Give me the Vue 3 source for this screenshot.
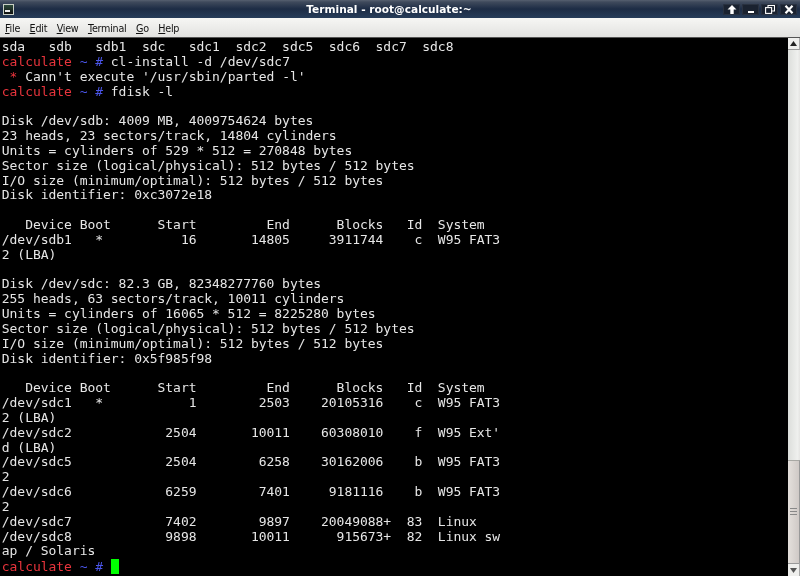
<script setup>
const L = (t) => [{ t }]
const P = (t = '') => [
  { t: 'calculate', c: 'red' },
  { t: ' ~ # ', c: 'blue' },
  { t }
]
const lines = [
  L('sda   sdb   sdb1  sdc   sdc1  sdc2  sdc5  sdc6  sdc7  sdc8'),
  P('cl-install -d /dev/sdc7'),
  [{ t: ' * ', c: 'red' }, { t: "Cann't execute '/usr/sbin/parted -l'" }],
  P('fdisk -l'),
  L(''),
  L('Disk /dev/sdb: 4009 MB, 4009754624 bytes'),
  L('23 heads, 23 sectors/track, 14804 cylinders'),
  L('Units = cylinders of 529 * 512 = 270848 bytes'),
  L('Sector size (logical/physical): 512 bytes / 512 bytes'),
  L('I/O size (minimum/optimal): 512 bytes / 512 bytes'),
  L('Disk identifier: 0xc3072e18'),
  L(''),
  L('   Device Boot      Start         End      Blocks   Id  System'),
  L('/dev/sdb1   *          16       14805     3911744    c  W95 FAT3'),
  L('2 (LBA)'),
  L(''),
  L('Disk /dev/sdc: 82.3 GB, 82348277760 bytes'),
  L('255 heads, 63 sectors/track, 10011 cylinders'),
  L('Units = cylinders of 16065 * 512 = 8225280 bytes'),
  L('Sector size (logical/physical): 512 bytes / 512 bytes'),
  L('I/O size (minimum/optimal): 512 bytes / 512 bytes'),
  L('Disk identifier: 0x5f985f98'),
  L(''),
  L('   Device Boot      Start         End      Blocks   Id  System'),
  L('/dev/sdc1   *           1        2503    20105316    c  W95 FAT3'),
  L('2 (LBA)'),
  L('/dev/sdc2            2504       10011    60308010    f  W95 Ext\''),
  L('d (LBA)'),
  L('/dev/sdc5            2504        6258    30162006    b  W95 FAT3'),
  L('2'),
  L('/dev/sdc6            6259        7401     9181116    b  W95 FAT3'),
  L('2'),
  L('/dev/sdc7            7402        9897    20049088+  83  Linux'),
  L('/dev/sdc8            9898       10011      915673+  82  Linux sw'),
  L('ap / Solaris'),
]
const menus = [
  ['F', 'ile'], ['E', 'dit'], ['V', 'iew'], ['T', 'erminal'], ['G', 'o'], ['H', 'elp']
]
</script>

<template>
  <div class="window">
    <header class="titlebar">
      <span class="app-icon"><i></i></span>
      <span class="title">Terminal - root@calculate:~</span>
      <div class="buttons">
        <span class="btn">
          <svg width="10" height="9" viewBox="0 0 10 9"><path d="M5 0 L9.5 4.5 H6.7 V9 H3.3 V4.5 H0.5 Z" fill="#fff"/></svg>
        </span>
        <span class="btn">
          <svg width="10" height="9" viewBox="0 0 10 9"><rect x="2" y="6" width="6" height="2" fill="#fff"/></svg>
        </span>
        <span class="btn">
          <svg width="10" height="9" viewBox="0 0 10 9"><path d="M3 2V0.5H9.5V6H7" fill="none" stroke="#fff" stroke-width="1.1"/><rect x="0.6" y="2.6" width="6" height="5.8" fill="none" stroke="#fff" stroke-width="1.1"/></svg>
        </span>
        <span class="btn">
          <svg width="10" height="9" viewBox="0 0 10 9"><path d="M1.5 0.8 L8.5 8.2 M8.5 0.8 L1.5 8.2" stroke="#fff" stroke-width="2.2"/></svg>
        </span>
      </div>
    </header>
    <nav class="menubar">
      <span v-for="m in menus" :key="m[0]" class="menu"><u>{{ m[0] }}</u>{{ m[1] }}</span>
    </nav>
    <div class="body">
      <pre class="term"><div v-for="(line, i) in lines" :key="i" class="row"><span v-for="(s, j) in line" :key="j" :class="s.c">{{ s.t }}</span></div><div class="row"><span class="red">calculate</span><span class="blue"> ~ # </span><span class="cursor"></span></div></pre>
      <aside class="scrollbar">
        <span class="arrow"><svg width="9" height="6" viewBox="0 0 9 6"><path d="M4.5 0 L8 5 H1 Z" fill="#222"/></svg></span>
        <span class="track"></span>
        <span class="thumb">
          <span class="grip"><i></i><i></i><i></i></span>
        </span>
        <span class="arrow down"><svg width="9" height="6" viewBox="0 0 9 6"><path d="M4.5 6 L8 1 H1 Z" fill="#555"/></svg></span>
      </aside>
    </div>
  </div>
</template>

<style scoped>
.window {
  width: 800px;
  height: 576px;
  display: flex;
  flex-direction: column;
  overflow: hidden;
  background: #000;
}
.titlebar {
  height: 18px;
  flex: none;
  display: flex;
  align-items: center;
  position: relative;
  background: linear-gradient(#566070 0, #3f4a5c 2px, #1d2c45 9px, #263c59 18px);
  color: #fff;
  font: bold 10.6px "DejaVu Sans", sans-serif;
}
.app-icon {
  width: 11px;
  height: 11px;
  margin-left: 3px;
  background: linear-gradient(#2d4a3a, #111);
  border: 1px solid #c8cfc4;
  display: flex;
  align-items: flex-end;
  box-sizing: border-box;
}
.app-icon i {
  width: 5px;
  height: 2px;
  margin: 0 0 2px 1px;
  background: #eee;
}
.title {
  position: absolute;
  left: 0;
  right: 22px;
  top: 4px;
  text-align: center;
  line-height: 11px;
  filter: blur(0.25px);
}
.buttons {
  margin-left: auto;
  margin-right: 3px;
  display: flex;
  gap: 2px;
  position: relative;
}
.btn {
  width: 17px;
  height: 11px;
  background: #1a2230;
  border-radius: 2px;
  box-shadow: inset 0 0 0 1px #2a3240;
  display: flex;
  align-items: center;
  justify-content: center;
}
.menubar {
  height: 20px;
  flex: none;
  box-sizing: border-box;
  padding: 1px 0 0 5px;
  display: flex;
  gap: 9.5px;
  align-items: center;
  background: linear-gradient(#f6f6f4, #e2e2e0);
  border-bottom: 1px solid #555;
  color: #111;
  font: 9.6px "DejaVu Sans", sans-serif;
  letter-spacing: -0.25px;
  filter: blur(0.2px);
}
.body {
  flex: 1;
  display: flex;
  min-height: 0;
}
.term {
  flex: 1;
  margin: 0;
  padding: 2.2px 0 0 1.8px;
  overflow: hidden;
  font: 13px/14.83px "DejaVu Sans Mono", monospace;
  letter-spacing: -0.04px;
  color: #e6e6e6;
  filter: blur(0.25px);
}
.row {
  height: 14.83px;
  white-space: pre;
}
.red { color: #e8343c; }
.blue { color: #4a55e8; }
.cursor {
  display: inline-block;
  width: 8px;
  height: 15px;
  background: #00ff00;
  vertical-align: -3px;
}
.scrollbar {
  width: 12px;
  flex: none;
  display: flex;
  flex-direction: column;
  background: #bdbcb6;
  box-sizing: border-box;
}
.arrow {
  height: 11px;
  flex: none;
  display: flex;
  align-items: center;
  justify-content: center;
  background: #efefed;
  border-bottom: 1px solid #999;
  border-right: 1px solid #aaa;
}
.arrow.down {
  height: 12px;
  border-bottom: 0;
  border-top: 1px solid #999;
}
.track {
  height: 410px;
  flex: none;
  background: linear-gradient(90deg, #dcdedb, #eff0ee 80%, #e4e4e2);
}
.thumb {
  flex: 1;
  display: flex;
  align-items: flex-end;
  justify-content: center;
  padding-bottom: 48px;
  box-sizing: border-box;
  background: linear-gradient(90deg, #e4e0dc, #cfc9c6);
  border-top: 1px solid #a8a8a4;
  border-right: 1px solid #999;
}
.grip {
  display: flex;
  flex-direction: column;
  gap: 2px;
}
.grip i {
  display: block;
  width: 7px;
  height: 1px;
  background: #888;
}
u { text-underline-offset: 1px; }
</style>

<style>
html, body { margin: 0; background: #000; }
</style>
